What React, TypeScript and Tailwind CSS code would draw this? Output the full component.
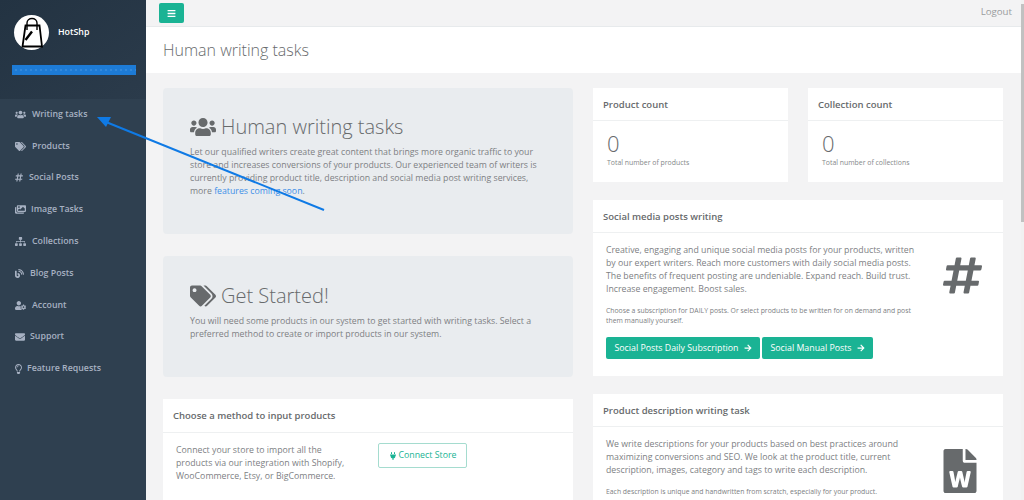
import { IconType } from "react-icons";
import {
  FaArrowRight,
  FaBars,
  FaBlog,
  FaEnvelope,
  FaFileWord,
  FaHashtag,
  FaImages,
  FaPlug,
  FaRegLightbulb,
  FaSitemap,
  FaTags,
  FaUserCog,
  FaUsers,
} from "react-icons/fa";

const navItems: { label: string; icon: IconType; iconClass: string }[] = [
  { label: "Writing tasks", icon: FaUsers, iconClass: "h-[11px] w-[11px] mr-[6px]" },
  { label: "Products", icon: FaTags, iconClass: "h-[11px] w-[11px] mr-[6px]" },
  { label: "Social Posts", icon: FaHashtag, iconClass: "h-[9px] w-[8px] mr-[6px]" },
  { label: "Image Tasks", icon: FaImages, iconClass: "h-[11px] w-[11px] mr-[5px]" },
  { label: "Collections", icon: FaSitemap, iconClass: "h-[11px] w-[11px] mr-[6px]" },
  { label: "Blog Posts", icon: FaBlog, iconClass: "h-[9px] w-[9px] mr-[6px]" },
  { label: "Account", icon: FaUserCog, iconClass: "h-[11px] w-[11px] mr-[6px]" },
  { label: "Support", icon: FaEnvelope, iconClass: "h-[10px] w-[10px] mr-[5px]" },
  { label: "Feature Requests", icon: FaRegLightbulb, iconClass: "h-[10px] w-[7px] mr-[5px]" },
];

function Logo() {
  return (
    <div className="flex h-[35px] w-[35px] items-center justify-center rounded-full bg-white">
      <svg viewBox="0 0 35 35" className="h-[35px] w-[35px]" fill="none" stroke="#000">
        <path d="M11.5 10.5 L25.5 10.5 L28 31.5 L8.5 31.5 Z" strokeWidth="1.8" />
        <path d="M13 15 V8 a5 4.5 0 0 1 10 0 V15" strokeWidth="1.4" />
        <path d="M11.5 25 L18 16.5" strokeWidth="2.4" />
      </svg>
    </div>
  );
}

function Sidebar() {
  return (
    <aside className="flex w-[146px] shrink-0 flex-col bg-[#2f4050]">
      <div className="h-[98.5px] bg-gradient-to-br from-[#233342] to-[#2b3b4b] pl-[14px] pt-[15px]">
        <div className="flex items-center gap-[9px]">
          <Logo />
          <span className="text-[8.8px] font-semibold text-white">HotShp</span>
        </div>
        <div className="ml-[-2px] mt-[15px] flex h-[10px] w-[124px] items-center bg-[#1d7bd6]">
          <div className="h-[2px] w-full bg-[repeating-linear-gradient(90deg,#1d7bd6_0_3px,#3389dc_3px_5px)]" />
        </div>
      </div>
      <nav className="flex flex-col">
        {navItems.map((item) => {
          const Icon = item.icon;
          return (
            <div
              key={item.label}
              className="flex h-[31.8px] items-center pl-[15px] text-[8.8px] font-semibold text-[#a7b1c2]"
            >
              <Icon className={`shrink-0 ${item.iconClass}`} />
              <span>{item.label}</span>
            </div>
          );
        })}
      </nav>
    </aside>
  );
}

function Jumbo({
  icon: Icon,
  title,
  className,
  children,
}: {
  icon: IconType;
  title: string;
  className: string;
  children: React.ReactNode;
}) {
  return (
    <section className={`rounded-[4px] bg-[#e9ecef] px-[27px] ${className}`}>
      <h1 className="flex items-center gap-[5px] text-[20px] leading-[28px] font-light text-[#676a6c]">
        <Icon className="h-[26px] w-[26px]" />
        <span>{title}</span>
      </h1>
      <p className="mt-[5px] text-[8.75px] leading-[13px] text-[#7d8083]">{children}</p>
    </section>
  );
}

function Card({
  title,
  headHeight = "h-[33px]",
  children,
}: {
  title: string;
  headHeight?: string;
  children: React.ReactNode;
}) {
  return (
    <section className="bg-white">
      <h5
        className={`flex items-center border-t border-b border-t-white border-b-[#eef0f1] px-[10px] pt-[1px] text-[9.5px] font-semibold text-[#676a6c] ${headHeight}`}
      >
        {title}
      </h5>
      {children}
    </section>
  );
}

function CountCard({ title, caption }: { title: string; caption: string }) {
  return (
    <Card title={title}>
      <div className="h-[61px] px-[14px] pt-[9px] text-[#676a6c]">
        <div className="text-[22px] leading-[26px] font-light">0</div>
        <div className="mt-[2px] text-[6.9px] leading-[10px] text-[#85888a]">{caption}</div>
      </div>
    </Card>
  );
}

function GreenButton({ children }: { children: React.ReactNode }) {
  return (
    <button className="flex h-[22.5px] items-center gap-[5px] rounded-[2px] bg-[#1ab394] px-[8.5px] text-[8.8px] text-white">
      {children}
      <FaArrowRight className="h-[8px] w-[8px]" />
    </button>
  );
}

export default function App() {
  return (
    <div className="relative flex h-[500px] w-[1024px] overflow-hidden bg-[#f3f3f4] font-['Open_Sans',sans-serif]">
      <Sidebar />
      <main className="flex min-w-0 flex-1 flex-col">
        <header className="flex h-[27px] shrink-0 items-start justify-between border-b border-[#e7eaec] pl-[13px] pr-[12px] pt-[3px]">
          <button className="flex h-[20px] w-[25px] items-center justify-center rounded-[2px] bg-[#1ab394] text-white">
            <FaBars className="h-[9px] w-[9px]" />
          </button>
          <span className="mt-[2px] text-[9.7px] leading-[14px] text-[#999c9e]">Logout</span>
        </header>
        <div className="flex h-[46px] shrink-0 items-center bg-white pl-[17px]">
          <h2 className="text-[16px] font-light text-[#676a6c]">Human writing tasks</h2>
        </div>
        <div className="flex gap-[20px] pl-[17px] pt-[15px]">
          <div className="flex w-[410px] shrink-0 flex-col">
            <Jumbo icon={FaUsers} title="Human writing tasks" className="h-[146px] pt-[25px]">
              Let our qualified writers create great content that brings more organic traffic to your store and
              increases conversions of your products. Our experienced team of writers is currently providing product
              title, description and social media post writing services, more{" "}
              <span className="text-[#3d8fe8]">features coming soon</span>.
            </Jumbo>
            <div className="h-[22px]" />
            <Jumbo icon={FaTags} title="Get Started!" className="h-[121px] pt-[26px]">
              You will need some products in our system to get started with writing tasks. Select a preferred method to
              create or import products in our system.
            </Jumbo>
            <div className="mt-[22px]">
              <Card title="Choose a method to input products" headHeight="h-[34px]">
                <div className="flex gap-[32px] px-[13px] pt-[10px] pb-[40px]">
                  <p className="mt-[1px] w-[170px] text-[8.75px] leading-[13px] text-[#7d8083]">
                    Connect your store to import all the products via our integration with Shopify, WooCommerce, Etsy,
                    or BigCommerce.
                  </p>
                  <button className="flex h-[25px] w-[89px] items-center justify-center gap-[2px] rounded-[2px] border border-[#a5dccf] text-[8.8px] text-[#1ab394]">
                    <FaPlug className="h-[8px] w-[8px]" />
                    Connect Store
                  </button>
                </div>
              </Card>
            </div>
          </div>
          <div className="flex w-[410px] shrink-0 flex-col gap-[18px]">
            <div className="grid grid-cols-[195px_195px] gap-[20px]">
              <CountCard title="Product count" caption="Total number of products" />
              <CountCard title="Collection count" caption="Total number of collections" />
            </div>
            <Card title="Social media posts writing">
              <div className="flex h-[143px] justify-between px-[13px] pt-[11px]">
                <div className="w-[316px]">
                  <p className="text-[8.75px] leading-[13px] text-[#7d8083]">
                    Creative, engaging and unique social media posts for your products, written by our expert writers.
                    Reach more customers with daily social media posts. The benefits of frequent posting are
                    undeniable. Expand reach. Build trust. Increase engagement. Boost sales.
                  </p>
                  <p className="mt-[10px] text-[6.85px] leading-[10.2px] text-[#7d8083]">
                    Choose a subscription for DAILY posts. Or select products to be written for on demand and post them
                    manually yourself.
                  </p>
                  <div className="mt-[10.5px] flex gap-[2px]">
                    <GreenButton>Social Posts Daily Subscription</GreenButton>
                    <GreenButton>Social Manual Posts</GreenButton>
                  </div>
                </div>
                <FaHashtag
                  preserveAspectRatio="none"
                  className="mr-[8px] mt-[11px] h-[41px] w-[39px] text-[#676a6c]"
                />
              </div>
            </Card>
            <Card title="Product description writing task">
              <div className="flex justify-between px-[13px] pt-[11px] pb-[20px]">
                <div className="w-[316px]">
                  <p className="text-[8.75px] leading-[13px] text-[#7d8083]">
                    We write descriptions for your products based on best practices around maximizing conversions and
                    SEO. We look at the product title, current description, images, category and tags to write each
                    description.
                  </p>
                  <p className="mt-[10px] text-[6.85px] leading-[10.2px] text-[#7d8083]">
                    Each description is unique and handwritten from scratch, especially for your product.
                  </p>
                </div>
                <FaFileWord className="mr-[8px] mt-[11px] h-[44px] w-[44px] text-[#676a6c]" />
              </div>
            </Card>
          </div>
        </div>
      </main>

      {/* annotation arrow drawn over the page */}
      <svg className="pointer-events-none absolute left-0 top-0" width="1024" height="500" fill="none">
        <path d="M324 210 L106 122" stroke="#0f7ae5" strokeWidth="2" />
        <path d="M97 117 L111 117 L106 127 Z" fill="#0f7ae5" />
      </svg>

      {/* page scrollbar */}
      <div className="absolute right-0 top-0 h-full w-[3px] bg-[#f1f1f1]">
        <div className="mt-[4px] h-[218px] w-full bg-[#c1c1c1]" />
      </div>
    </div>
  );
}
